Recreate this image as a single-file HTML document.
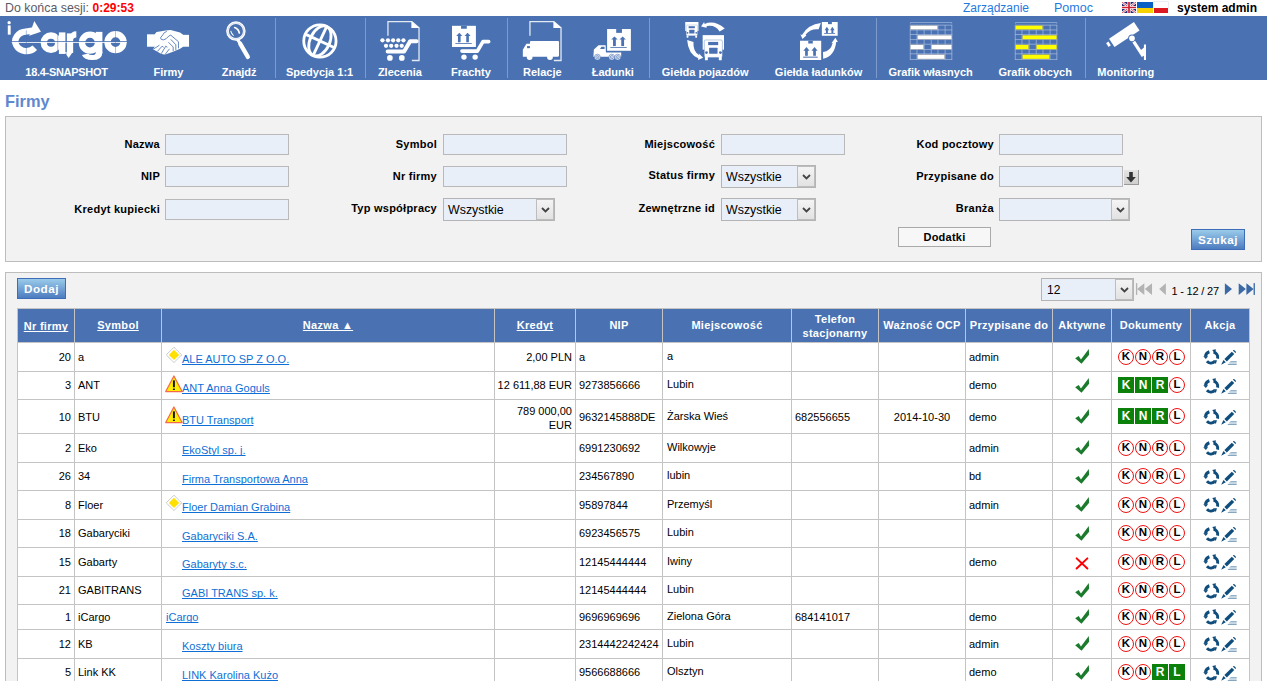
<!DOCTYPE html><html><head><meta charset="utf-8"><title>Firmy</title><style>
*{margin:0;padding:0;box-sizing:border-box}
html,body{width:1267px;height:681px;overflow:hidden;background:#fff}
body{position:relative;font-family:"Liberation Sans",sans-serif;font-size:11px;color:#000}
.abs{position:absolute}
.t{position:absolute;white-space:nowrap}
.nav{position:absolute;left:0;top:16px;width:1267px;height:64px;background:#4a72b2}
.nl{position:absolute;top:65px;white-space:nowrap;color:#fff;font-weight:bold;font-size:11px;text-align:center;line-height:14px}
.sep{position:absolute;top:18px;width:1px;height:60px;background:#7e9bcb}
.panel{position:absolute;background:#f2f2f2;border:1px solid #bdbdbd}
.lbl{position:absolute;white-space:nowrap;font-weight:bold;font-size:11px;text-align:right;color:#000;letter-spacing:0.25px;line-height:14px}
.inp{position:absolute;background:#e9eff8;border:1px solid #b9b9b9}
.sel{position:absolute;background:#e9eff8;border:1px solid #b4b4b4;font-size:12.4px;color:#000}
.selb{position:absolute;top:0px;bottom:0px;right:0px;width:18px;background:linear-gradient(#f4f4f4,#e2e2e2);border:1px solid #bdbdbd;display:flex;align-items:center;justify-content:center}
.vl{position:absolute;width:1px;background:#c4c4c4}
.hl{position:absolute;height:1px;background:#c4c4c4}
.th{position:absolute;color:#fff;font-weight:bold;font-size:11px;text-align:center;white-space:nowrap;letter-spacing:0.3px}
.th u{text-decoration:underline;text-decoration-skip-ink:none}
.c{position:absolute;white-space:nowrap;font-size:11px}
.lnk{color:#0f6fd6;text-decoration:underline;text-decoration-skip-ink:none}
.doc{position:absolute;width:16px;height:16px;border-radius:50%;border:1.5px solid #f01010;background:#fff;font-weight:bold;font-size:11.5px;line-height:13px;text-align:center;color:#000}
.docg{position:absolute;width:16px;height:16px;background:#0b800b;color:#fff;font-weight:bold;font-size:12px;line-height:16px;text-align:center}
.btn{position:absolute;background:linear-gradient(#9acbea,#4d7cc0);border:1px solid #3d6cb8;color:#fff;font-weight:bold;font-size:11.7px;text-align:center;letter-spacing:0.5px}
</style></head><body>
<div class="t" style="left:5px;top:1px;font-size:12.4px;line-height:15px;color:#5b5b66">Do końca sesji: <b style="color:#f00;font-size:12px">0:29:53</b></div>
<div class="t" style="left:963px;top:1px;font-size:12px;line-height:15px;color:#1f7ade">Zarządzanie</div>
<div class="t" style="left:1054px;top:1px;font-size:12.5px;line-height:15px;color:#1f7ade">Pomoc</div>
<div class="t" style="left:1177px;top:1px;font-size:12px;line-height:15px;font-weight:bold">system admin</div>
<svg class="abs" style="left:1122px;top:2px" width="14" height="11" viewBox="0 0 14 11"><rect width="14" height="11" fill="#232d78"/><path d="M0 0 L14 11 M14 0 L0 11" stroke="#fff" stroke-width="2.2"/><path d="M0 0 L14 11 M14 0 L0 11" stroke="#cf2030" stroke-width="0.8"/><path d="M7 0 V11 M0 5.5 H14" stroke="#fff" stroke-width="3.2"/><path d="M7 0 V11 M0 5.5 H14" stroke="#cf2030" stroke-width="1.7"/></svg>
<div class="abs" style="left:1137px;top:2px;width:16px;height:5.5px;background:#0a5fc4"></div><div class="abs" style="left:1137px;top:7.5px;width:16px;height:5.5px;background:#f7d000"></div>
<div class="abs" style="left:1154px;top:2px;width:14px;height:5.5px;background:#fff;box-shadow:0 0 0 0.5px #ddd"></div><div class="abs" style="left:1154px;top:7.5px;width:14px;height:5.5px;background:#dd1a22"></div>
<div class="nav"></div>
<svg class="abs" style="left:4px;top:18px" width="130" height="46" viewBox="0 0 1267 448"><circle cx="50" cy="45" r="16" fill="#fff"/><rect x="37" y="72" width="28" height="90" fill="#fff"/><path d="M300 290 A108 95 0 1 1 215 133" fill="none" stroke="#fff" stroke-width="62"/><path d="M295 30 L360 135 L245 172 Z" fill="#fff"/><path d="M210 102 L300 88 L300 150 L210 164Z" fill="#fff"/><circle cx="458" cy="240" r="70" fill="none" stroke="#fff" stroke-width="62"/><rect x="535" y="140" width="64" height="210" fill="#fff"/><rect x="612" y="150" width="62" height="190" fill="#fff"/><path d="M590 330 L670 330 L630 390Z" fill="#fff"/><path d="M640 185 Q650 130 705 130 L705 190 Q675 190 672 215Z" fill="#fff"/><circle cx="838" cy="240" r="78" fill="none" stroke="#fff" stroke-width="62"/><rect x="895" y="135" width="64" height="210" fill="#fff"/><path d="M959 330 Q959 410 860 410 Q780 410 760 360 L820 345 Q830 360 860 360 Q897 360 897 330Z" fill="#fff"/><circle cx="1087" cy="235" r="78" fill="none" stroke="#fff" stroke-width="62"/><rect x="70" y="226" width="1130" height="9" fill="#4a72b2"/><rect x="75" y="235" width="1122" height="8" fill="#fff"/><rect x="213" y="120" width="8" height="240" fill="#4a72b2" opacity="0.55"/><rect x="520" y="120" width="8" height="240" fill="#4a72b2" opacity="0.55"/><rect x="602" y="120" width="8" height="240" fill="#4a72b2" opacity="0.55"/><rect x="1083" y="120" width="8" height="240" fill="#4a72b2" opacity="0.55"/></svg><svg class="abs" style="left:142px;top:24px" width="52" height="36" viewBox="0 0 984 681"><rect x="95" y="195" width="150" height="235" fill="#fff"/><rect x="770" y="205" width="120" height="225" fill="#fff"/><path d="M240 195 L275 150 L450 122 L540 115 L720 160 L778 205 L778 430 L720 470 L600 520 L430 580 L350 560 L210 480 L240 430Z" fill="#fff"/><path d="M470 140 L420 165 L395 205 L350 262 L365 292 L405 300 L455 280 L510 225 L545 212 L690 335 L690 460" stroke="#4a72b2" stroke-width="16" fill="none" stroke-linejoin="round"/><path d="M500 345 L590 435 L590 515" stroke="#4a72b2" stroke-width="16" fill="none" stroke-linejoin="round"/><path d="M545 292 L640 392 L640 495" stroke="#4a72b2" stroke-width="16" fill="none" stroke-linejoin="round"/><path d="M225 470 L330 400 M290 520 L380 420 L410 440 M365 560 L450 420 L480 440 M430 585 L520 470" stroke="#4a72b2" stroke-width="16" fill="none" stroke-linejoin="round"/></svg><svg class="abs" style="left:218px;top:18px" width="40" height="44" viewBox="0 0 619 681"><circle cx="277" cy="202" r="130" fill="none" stroke="#fff" stroke-width="42"/><circle cx="277" cy="202" r="126" fill="none" stroke="#8ea8d6" stroke-width="6"/><path d="M300 330 L345 395" stroke="#fff" stroke-width="48"/><path d="M345 400 L462 602" stroke="#fff" stroke-width="66" stroke-linecap="round"/><path d="M258 148 Q318 172 330 232" fill="none" stroke="#fff" stroke-width="26" stroke-linecap="round"/><path d="M198 205 Q208 245 238 268" fill="none" stroke="#fff" stroke-width="16" stroke-linecap="round"/></svg><svg class="abs" style="left:298px;top:20px" width="44" height="42" viewBox="0 0 713 681"><circle cx="355" cy="340" r="262" fill="none" stroke="#fff" stroke-width="46"/><ellipse cx="355" cy="340" rx="160" ry="258" transform="rotate(25 355 340)" fill="none" stroke="#fff" stroke-width="46"/><path d="M466 103 L244 577" fill="none" stroke="#fff" stroke-width="46"/><path d="M118 229 L592 451" fill="none" stroke="#fff" stroke-width="46"/></svg><svg class="abs" style="left:376px;top:18px" width="50" height="44" viewBox="0 0 774 681"><path d="M185 275 V55 H555 L666 152 V658 H555" fill="none" stroke="#fff" stroke-width="20" opacity="0.85"/><path d="M548 50 L548 155 L672 155Z" fill="#fff"/><circle cx="100" cy="345" r="33" fill="#fff"/><circle cx="185" cy="345" r="33" fill="#fff"/><circle cx="265" cy="345" r="33" fill="#fff"/><circle cx="345" cy="345" r="33" fill="#fff"/><circle cx="425" cy="345" r="33" fill="#fff"/><circle cx="155" cy="430" r="33" fill="#fff"/><circle cx="235" cy="430" r="33" fill="#fff"/><circle cx="318" cy="430" r="33" fill="#fff"/><circle cx="398" cy="430" r="33" fill="#fff"/><path d="M180 518 L435 518 L530 358 L628 358" fill="none" stroke="#fff" stroke-width="62" stroke-linecap="round" stroke-linejoin="round"/><circle cx="215" cy="618" r="44" fill="#fff"/><circle cx="400" cy="618" r="44" fill="#fff"/></svg><svg class="abs" style="left:448px;top:22px" width="46" height="40" viewBox="0 0 783 681"><rect x="68" y="65" width="407" height="360" fill="#fff"/><rect x="222" y="65" width="98" height="50" fill="#4a72b2"/><rect x="169.5" y="230" width="45" height="115" fill="#4a72b2"/><path d="M140.25 240 L192 185 L243.75 240Z" fill="#4a72b2"/><rect x="310.5" y="230" width="45" height="115" fill="#4a72b2"/><path d="M281.25 240 L333 185 L384.75 240Z" fill="#4a72b2"/><rect x="125" y="358" width="280" height="14" fill="#4a72b2"/><path d="M238 495 L500 495 L595 335 L692 335" fill="none" stroke="#fff" stroke-width="62" stroke-linecap="round" stroke-linejoin="round"/><circle cx="272" cy="598" r="46" fill="#fff"/><circle cx="462" cy="598" r="46" fill="#fff"/></svg><svg class="abs" style="left:518px;top:18px" width="48" height="44" viewBox="0 0 743 681"><path d="M185 275 V55 H555 L666 152 V658 H555" fill="none" stroke="#fff" stroke-width="20" opacity="0.85"/><path d="M548 50 L548 155 L672 155Z" fill="#fff"/><rect x="185" y="355" width="450" height="245" rx="18" fill="#fff"/><path d="M75 600 L75 490 L130 400 L200 400 L200 600Z" fill="#fff"/><rect x="140" y="435" width="45" height="32" fill="#4a72b2"/><circle cx="180" cy="605" r="45" fill="#fff"/><circle cx="495" cy="605" r="45" fill="#fff"/></svg><svg class="abs" style="left:588px;top:22px" width="48" height="40" viewBox="0 0 817 681"><path d="M92 590 L100 470 L180 395 L300 395 L305 520 L565 520 L565 590Z" fill="#fff"/><path d="M205 458 L228 420 L282 420 L282 458Z" fill="#4a72b2"/><rect x="318" y="113" width="419" height="384" fill="#4a72b2"/><rect x="325" y="120" width="405" height="370" fill="#fff"/><rect x="480" y="120" width="98" height="65" fill="#4a72b2"/><rect x="426.0" y="290" width="48" height="120" fill="#4a72b2"/><path d="M394.8 300 L450 245 L505.2 300Z" fill="#4a72b2"/><rect x="566.0" y="290" width="48" height="120" fill="#4a72b2"/><path d="M534.8 300 L590 245 L645.2 300Z" fill="#4a72b2"/><rect x="380" y="428" width="280" height="14" fill="#4a72b2"/><circle cx="160" cy="598" r="50" fill="#fff" stroke="#4a72b2" stroke-width="10"/><circle cx="160" cy="598" r="27" fill="none" stroke="#4a72b2" stroke-width="12"/><circle cx="160" cy="598" r="9" fill="#4a72b2"/><circle cx="405" cy="598" r="50" fill="#fff" stroke="#4a72b2" stroke-width="10"/><circle cx="405" cy="598" r="27" fill="none" stroke="#4a72b2" stroke-width="12"/><circle cx="405" cy="598" r="9" fill="#4a72b2"/><circle cx="505" cy="598" r="50" fill="#fff" stroke="#4a72b2" stroke-width="10"/><circle cx="505" cy="598" r="27" fill="none" stroke="#4a72b2" stroke-width="12"/><circle cx="505" cy="598" r="9" fill="#4a72b2"/></svg><svg class="abs" style="left:682px;top:18px" width="46" height="44" viewBox="0 0 712 681"><rect x="320.0" y="265.0" width="330.0" height="225.0" fill="#fff"/><rect x="345.0" y="340.0" width="280.0" height="270.0" rx="20.0" fill="#fff" stroke="#4a72b2" stroke-width="6.0"/><rect x="405.0" y="370.0" width="155.0" height="50.0" fill="#4a72b2"/><rect x="420.0" y="460.0" width="130.0" height="95.0" rx="8.0" fill="#4a72b2"/><circle cx="378.0" cy="535.0" r="22.0" fill="#4a72b2"/><circle cx="595.0" cy="535.0" r="22.0" fill="#4a72b2"/><rect x="355.0" y="600.0" width="45.0" height="55.0" rx="10.0" fill="#fff"/><rect x="570.0" y="600.0" width="45.0" height="55.0" rx="10.0" fill="#fff"/><rect x="50.0" y="62.0" width="204.6" height="139.5" fill="#fff"/><rect x="65.5" y="108.5" width="173.6" height="167.4" rx="12.4" fill="#fff" stroke="#4a72b2" stroke-width="3.7199999999999998"/><rect x="102.7" y="127.1" width="96.1" height="31.0" fill="#4a72b2"/><rect x="112.0" y="182.9" width="80.6" height="58.9" rx="4.96" fill="#4a72b2"/><circle cx="85.96000000000001" cy="229.4" r="13.64" fill="#4a72b2"/><circle cx="220.5" cy="229.4" r="13.64" fill="#4a72b2"/><rect x="71.7" y="269.7" width="27.9" height="34.1" rx="6.2" fill="#fff"/><rect x="205.0" y="269.7" width="27.9" height="34.1" rx="6.2" fill="#fff"/><path d="M295 132 L342 62 L350 92 Q500 25 662 162 L582 208 Q520 100 385 122 L378 152Z" fill="#fff"/><path d="M80 340 L178 372 Q165 515 268 578 L258 545 L328 615 L248 650 L252 622 Q95 560 80 340Z" fill="#fff"/></svg><svg class="abs" style="left:796px;top:18px" width="46" height="44" viewBox="0 0 712 681"><rect x="400" y="62" width="245" height="213" fill="#fff"/><rect x="495" y="62" width="60" height="33" fill="#4a72b2"/><rect x="463.0" y="180" width="30" height="55" fill="#4a72b2"/><path d="M443.5 190 L478 135 L512.5 190Z" fill="#4a72b2"/><rect x="548.0" y="180" width="30" height="55" fill="#4a72b2"/><path d="M528.5 190 L563 135 L597.5 190Z" fill="#4a72b2"/><rect x="435" y="232" width="170" height="12" fill="#4a72b2"/><rect x="62" y="352" width="328" height="298" fill="#fff"/><rect x="190" y="352" width="70" height="43" fill="#4a72b2"/><rect x="141.0" y="495" width="42" height="90" fill="#4a72b2"/><path d="M113.7 505 L162 450 L210.3 505Z" fill="#4a72b2"/><rect x="266.0" y="495" width="42" height="90" fill="#4a72b2"/><path d="M238.7 505 L287 450 L335.3 505Z" fill="#4a72b2"/><rect x="110" y="598" width="225" height="16" fill="#4a72b2"/><path d="M385 78 L350 175 Q230 160 150 255 L160 272 L100 325 L68 250 L92 262 Q190 100 385 78Z" fill="#fff"/><path d="M418 525 Q535 515 568 385 L548 390 L610 305 L648 372 L622 372 Q600 590 420 632Z" fill="#fff"/></svg><svg class="abs" style="left:906px;top:18px" width="50" height="44" viewBox="0 0 774 681"><path d="M68 88 V70 H708 V88" fill="none" stroke="#a9bde0" stroke-width="10"/><rect x="59" y="108" width="12" height="537" fill="#a9bde0" opacity="0.9"/><rect x="164" y="108" width="12" height="537" fill="#a9bde0" opacity="0.9"/><rect x="274" y="108" width="12" height="537" fill="#a9bde0" opacity="0.9"/><rect x="384" y="108" width="12" height="537" fill="#a9bde0" opacity="0.9"/><rect x="489" y="108" width="12" height="537" fill="#a9bde0" opacity="0.9"/><rect x="599" y="108" width="12" height="537" fill="#a9bde0" opacity="0.9"/><rect x="704" y="108" width="12" height="537" fill="#a9bde0" opacity="0.9"/><rect x="60" y="104" width="656" height="12" fill="#a9bde0" opacity="0.9"/><rect x="60" y="179" width="656" height="12" fill="#a9bde0" opacity="0.9"/><rect x="60" y="249" width="656" height="12" fill="#a9bde0" opacity="0.9"/><rect x="60" y="329" width="656" height="12" fill="#a9bde0" opacity="0.9"/><rect x="60" y="399" width="656" height="12" fill="#a9bde0" opacity="0.9"/><rect x="60" y="479" width="656" height="12" fill="#a9bde0" opacity="0.9"/><rect x="60" y="549" width="656" height="12" fill="#a9bde0" opacity="0.9"/><rect x="60" y="634" width="656" height="12" fill="#a9bde0" opacity="0.9"/><rect x="65" y="115" width="425" height="65" fill="#fff" stroke="#8a8a8a" stroke-width="6"/><rect x="175" y="265" width="535" height="65" fill="#fff" stroke="#8a8a8a" stroke-width="6"/><rect x="65" y="415" width="210" height="70" fill="#fff" stroke="#8a8a8a" stroke-width="6"/><rect x="390" y="415" width="320" height="70" fill="#fff" stroke="#8a8a8a" stroke-width="6"/><rect x="175" y="565" width="425" height="70" fill="#fff" stroke="#8a8a8a" stroke-width="6"/></svg><svg class="abs" style="left:1011px;top:18px" width="50" height="44" viewBox="0 0 774 681"><path d="M68 88 V70 H708 V88" fill="none" stroke="#a9bde0" stroke-width="10"/><rect x="59" y="108" width="12" height="537" fill="#a9bde0" opacity="0.9"/><rect x="164" y="108" width="12" height="537" fill="#a9bde0" opacity="0.9"/><rect x="274" y="108" width="12" height="537" fill="#a9bde0" opacity="0.9"/><rect x="384" y="108" width="12" height="537" fill="#a9bde0" opacity="0.9"/><rect x="489" y="108" width="12" height="537" fill="#a9bde0" opacity="0.9"/><rect x="599" y="108" width="12" height="537" fill="#a9bde0" opacity="0.9"/><rect x="704" y="108" width="12" height="537" fill="#a9bde0" opacity="0.9"/><rect x="60" y="104" width="656" height="12" fill="#a9bde0" opacity="0.9"/><rect x="60" y="179" width="656" height="12" fill="#a9bde0" opacity="0.9"/><rect x="60" y="249" width="656" height="12" fill="#a9bde0" opacity="0.9"/><rect x="60" y="329" width="656" height="12" fill="#a9bde0" opacity="0.9"/><rect x="60" y="399" width="656" height="12" fill="#a9bde0" opacity="0.9"/><rect x="60" y="479" width="656" height="12" fill="#a9bde0" opacity="0.9"/><rect x="60" y="549" width="656" height="12" fill="#a9bde0" opacity="0.9"/><rect x="60" y="634" width="656" height="12" fill="#a9bde0" opacity="0.9"/><rect x="65" y="115" width="425" height="65" fill="#ffff00" stroke="#8a8a8a" stroke-width="6"/><rect x="175" y="265" width="535" height="65" fill="#ffff00" stroke="#8a8a8a" stroke-width="6"/><rect x="65" y="415" width="210" height="70" fill="#ffff00" stroke="#8a8a8a" stroke-width="6"/><rect x="390" y="415" width="320" height="70" fill="#ffff00" stroke="#8a8a8a" stroke-width="6"/><rect x="175" y="565" width="425" height="70" fill="#ffff00" stroke="#8a8a8a" stroke-width="6"/></svg><svg class="abs" style="left:1100px;top:18px" width="50" height="44" viewBox="0 0 774 681"><path d="M140 322 L525 62 L612 192 L225 448Z" fill="#fff"/><path d="M95 392 L130 365 L168 420 L133 447Z" fill="#fff"/><circle cx="495" cy="315" r="58" fill="#4a72b2"/><circle cx="495" cy="315" r="44" fill="#fff"/><path d="M522 365 L668 590" stroke="#fff" stroke-width="50"/><rect x="680" y="410" width="32" height="240" fill="#fff"/><path d="M630 500 L690 450 L690 615Z" fill="#fff"/></svg>
<div class="nl" style="left:15.5px;width:102px;letter-spacing:-0.3px">18.4-SNAPSHOT</div>
<div class="nl" style="left:143.3px;width:50.4px;">Firmy</div>
<div class="nl" style="left:211.1px;width:56.1px;">Znajdź</div>
<div class="nl" style="left:276.8px;width:85.5px;">Spedycja 1:1</div>
<div class="nl" style="left:367px;width:65.8px;">Zlecenia</div>
<div class="nl" style="left:441.2px;width:59.5px;">Frachty</div>
<div class="nl" style="left:513.4px;width:57.9px;">Relacje</div>
<div class="nl" style="left:581px;width:63.7px;">Ładunki</div>
<div class="nl" style="left:650.5px;width:109.4px;">Giełda pojazdów</div>
<div class="nl" style="left:763.4px;width:110.3px;">Giełda ładunków</div>
<div class="nl" style="left:877px;width:107.2px;">Grafik własnych</div>
<div class="nl" style="left:987.9px;width:94.6px;">Grafik obcych</div>
<div class="nl" style="left:1086.2px;width:79.1px;">Monitoring</div>
<div class="sep" style="left:275px"></div>
<div class="sep" style="left:365px"></div>
<div class="sep" style="left:507px"></div>
<div class="sep" style="left:649px"></div>
<div class="sep" style="left:876px"></div>
<div class="sep" style="left:1085px"></div>
<div class="t" style="left:5px;top:91px;font-size:16.4px;line-height:20px;font-weight:bold;color:#5f88cf">Firmy</div>
<div class="panel" style="left:5px;top:116px;width:1257px;height:146px"></div>
<div class="lbl" style="right:1107px;top:137px">Nazwa</div>
<div class="inp" style="left:165px;top:134px;width:124px;height:21px"></div>
<div class="lbl" style="right:1107px;top:169px">NIP</div>
<div class="inp" style="left:165px;top:166px;width:124px;height:21px"></div>
<div class="lbl" style="right:1107px;top:202px">Kredyt kupiecki</div>
<div class="inp" style="left:165px;top:199px;width:124px;height:21px"></div>
<div class="lbl" style="right:830px;top:137px">Symbol</div>
<div class="inp" style="left:443px;top:134px;width:124px;height:21px"></div>
<div class="lbl" style="right:830px;top:169px">Nr firmy</div>
<div class="inp" style="left:443px;top:166px;width:124px;height:21px"></div>
<div class="lbl" style="right:830px;top:201px">Typ współpracy</div>
<div class="sel" style="left:443px;top:198px;width:112px;height:23px"><span class="t" style="left:4px;top:3px;line-height:17px">Wszystkie</span><div class="selb"><svg width="9" height="6" style="display:block"><path d="M1 1 L4.5 4.5 L8 1" stroke="#444" stroke-width="1.8" fill="none"/></svg></div></div>
<div class="lbl" style="right:552px;top:137px">Miejscowość</div>
<div class="inp" style="left:721px;top:134px;width:124px;height:21px"></div>
<div class="lbl" style="right:552px;top:168px">Status firmy</div>
<div class="sel" style="left:721px;top:165px;width:95px;height:23px"><span class="t" style="left:4px;top:3px;line-height:17px">Wszystkie</span><div class="selb"><svg width="9" height="6" style="display:block"><path d="M1 1 L4.5 4.5 L8 1" stroke="#444" stroke-width="1.8" fill="none"/></svg></div></div>
<div class="lbl" style="right:552px;top:201px">Zewnętrzne id</div>
<div class="sel" style="left:721px;top:198px;width:95px;height:23px"><span class="t" style="left:4px;top:3px;line-height:17px">Wszystkie</span><div class="selb"><svg width="9" height="6" style="display:block"><path d="M1 1 L4.5 4.5 L8 1" stroke="#444" stroke-width="1.8" fill="none"/></svg></div></div>
<div class="lbl" style="right:273px;top:137px">Kod pocztowy</div>
<div class="inp" style="left:999px;top:134px;width:124px;height:21px"></div>
<div class="lbl" style="right:273px;top:169px">Przypisane do</div>
<div class="inp" style="left:999px;top:166px;width:124px;height:21px"></div>
<div class="abs" style="left:1124px;top:170px;width:15px;height:15px;background:linear-gradient(#e4e4e4,#cfcfcf);border-right:1px solid #9a9a9a;border-bottom:1px solid #9a9a9a"><svg width="15" height="15" style="position:absolute;left:0;top:0"><path d="M5.2 2h3.6v5h3l-4.8 5.5l-4.8-5.5h3z" fill="#333"/></svg></div>
<div class="lbl" style="right:273px;top:201px">Branża</div>
<div class="sel" style="left:999px;top:198px;width:131px;height:23px"><span class="t" style="left:4px;top:3px;line-height:17px"></span><div class="selb"><svg width="9" height="6" style="display:block"><path d="M1 1 L4.5 4.5 L8 1" stroke="#444" stroke-width="1.8" fill="none"/></svg></div></div>
<div class="abs" style="left:898px;top:227px;width:93px;height:20px;background:#f7f7f7;border:1px solid #a9a9a9;font-weight:bold;font-size:11px;line-height:18px;text-align:center;letter-spacing:0.25px">Dodatki</div>
<div class="btn" style="left:1191px;top:229px;width:54px;height:21px;line-height:19px">Szukaj</div>
<div class="panel" style="left:5px;top:272px;width:1257px;height:420px"></div>
<div class="btn" style="left:17px;top:278px;width:49px;height:21px;line-height:19px">Dodaj</div>
<div class="sel" style="left:1041px;top:278px;width:93px;height:23px;font-size:12px"><span class="t" style="left:5px;top:3px;line-height:17px">12</span><div class="selb"><svg width="9" height="6" style="display:block"><path d="M1 1 L4.5 4.5 L8 1" stroke="#444" stroke-width="1.8" fill="none"/></svg></div></div>
<div class="t" style="left:1171.5px;top:284px;font-size:11px;line-height:14px;color:#000;letter-spacing:-0.2px">1 - 12 / 27</div>
<svg class="abs" style="left:1132px;top:278px" width="130" height="24" viewBox="0 0 1267 234"><rect x="38" y="50" width="13" height="115" fill="#b3b3b3"/><path d="M50 108 L120 50 L120 165Z M125 108 L195 50 L195 165Z" fill="#b3b3b3"/><path d="M265 108 L330 50 L330 165Z" fill="#b3b3b3"/><path d="M905 50 L975 108 L905 165Z" fill="#3b69a6"/><path d="M1040 50 L1110 108 L1040 165Z M1115 50 L1185 108 L1115 165Z" fill="#3b69a6"/><rect x="1185" y="50" width="13" height="115" fill="#3b69a6"/></svg>
<div class="abs" style="left:17px;top:309px;width:1232px;height:33px;background:#4a72b2"></div>
<div class="abs" style="left:18px;top:342px;width:1231px;height:339px;background:#fff"></div>
<div class="hl" style="left:17px;top:308px;width:1233px"></div>
<div class="hl" style="left:17px;top:342px;width:1233px"></div>
<div class="hl" style="left:17px;top:371px;width:1233px"></div>
<div class="hl" style="left:17px;top:399px;width:1233px"></div>
<div class="hl" style="left:17px;top:433px;width:1233px"></div>
<div class="hl" style="left:17px;top:462px;width:1233px"></div>
<div class="hl" style="left:17px;top:490px;width:1233px"></div>
<div class="hl" style="left:17px;top:519px;width:1233px"></div>
<div class="hl" style="left:17px;top:547px;width:1233px"></div>
<div class="hl" style="left:17px;top:576px;width:1233px"></div>
<div class="hl" style="left:17px;top:604px;width:1233px"></div>
<div class="hl" style="left:17px;top:629px;width:1233px"></div>
<div class="hl" style="left:17px;top:658px;width:1233px"></div>
<div class="hl" style="left:17px;top:686px;width:1233px"></div>
<div class="vl" style="left:17px;top:308px;height:373px"></div>
<div class="vl" style="left:74px;top:308px;height:373px"></div>
<div class="vl" style="left:161px;top:308px;height:373px"></div>
<div class="vl" style="left:494px;top:308px;height:373px"></div>
<div class="vl" style="left:575px;top:308px;height:373px"></div>
<div class="vl" style="left:662px;top:308px;height:373px"></div>
<div class="vl" style="left:791px;top:308px;height:373px"></div>
<div class="vl" style="left:878px;top:308px;height:373px"></div>
<div class="vl" style="left:965px;top:308px;height:373px"></div>
<div class="vl" style="left:1052px;top:308px;height:373px"></div>
<div class="vl" style="left:1111px;top:308px;height:373px"></div>
<div class="vl" style="left:1190px;top:308px;height:373px"></div>
<div class="vl" style="left:1249px;top:308px;height:373px"></div>
<div class="th" style="left:18px;width:56px;top:319px;line-height:14px"><u>Nr firmy</u></div>
<div class="th" style="left:75px;width:86px;top:318px;line-height:14px"><u>Symbol</u></div>
<div class="th" style="left:162px;width:332px;top:318px;line-height:14px"><u>Nazwa ▲</u></div>
<div class="th" style="left:495px;width:80px;top:318px;line-height:14px"><u>Kredyt</u></div>
<div class="th" style="left:576px;width:86px;top:318px;line-height:14px">NIP</div>
<div class="th" style="left:663px;width:128px;top:318px;line-height:14px">Miejscowość</div>
<div class="th" style="left:792px;width:86px;top:312px;line-height:14px">Telefon<br>stacjonarny</div>
<div class="th" style="left:879px;width:86px;top:318px;line-height:14px">Ważność OCP</div>
<div class="th" style="left:966px;width:86px;top:318px;line-height:14px">Przypisane do</div>
<div class="th" style="left:1053px;width:58px;top:318px;line-height:14px">Aktywne</div>
<div class="th" style="left:1112px;width:78px;top:318px;line-height:14px">Dokumenty</div>
<div class="th" style="left:1191px;width:58px;top:318px;line-height:14px">Akcja</div>
<div class="c" style="left:18px;width:53px;text-align:right;top:343px;height:28px;line-height:28px;">20</div>
<div class="c" style="left:78px;top:343px;height:28px;line-height:28px;">a</div>
<div class="c" style="left:182px;top:345px;height:28px;line-height:28px"><span class="lnk">ALE AUTO SP Z O.O.</span></div>
<svg class="abs" style="left:162px;top:344.0px" width="30" height="26" viewBox="0 0 786 681"><path d="M315 85 L515 285 L315 485 L110 285Z" fill="#fff" stroke="#a8a8a8" stroke-width="22" stroke-dasharray="30 12"/><path d="M315 150 L450 285 L315 420 L180 285Z" fill="#ffe000"/></svg>
<div class="c" style="left:495px;width:77px;text-align:right;top:343px;height:28px;line-height:28px;">2,00 PLN</div>
<div class="c" style="left:579px;top:343px;height:28px;line-height:28px;">a</div>
<div class="c" style="left:667px;top:342px;height:28px;line-height:28px;">a</div>
<div class="c" style="left:969px;top:343px;height:28px;line-height:28px;">admin</div>
<svg class="abs" style="left:1066px;top:344.0px" width="32" height="32" viewBox="0 0 681 681"><path d="M195 305 L270 258 L318 332 L485 108 L492 228 L330 422Z" fill="#1c7a2c"/></svg>
<div class="doc" style="left:1118px;top:348.7px">K</div>
<div class="doc" style="left:1135px;top:348.7px">N</div>
<div class="doc" style="left:1152px;top:348.7px">R</div>
<div class="doc" style="left:1169px;top:348.7px">L</div>
<svg class="abs" style="left:1200px;top:346.0px" width="40" height="22" viewBox="0 0 1238 681"><path d="M290 180 A175 175 0 0 0 170 330" fill="none" stroke="#0f4d7c" stroke-width="95"/><path d="M100 315 L250 315 L180 405Z" fill="#0f4d7c"/><path d="M420 185 A175 175 0 0 1 545 390" fill="none" stroke="#0f4d7c" stroke-width="95"/><path d="M378 125 L492 98 L472 245Z" fill="#0f4d7c"/><path d="M215 470 A175 175 0 0 0 450 490" fill="none" stroke="#0f4d7c" stroke-width="95"/><path d="M410 440 L525 438 L490 555Z" fill="#0f4d7c"/><path d="M755 400 L985 175 L1060 250 L830 480Z" fill="#0f4d7c"/><path d="M1015 140 Q1040 110 1075 140 L1110 178 Q1120 210 1095 220Z" fill="#0f4d7c"/><path d="M728 432 L798 505 L655 580Z" fill="#0f4d7c"/><rect x="940" y="465" width="195" height="25" fill="#7aa0bd"/><rect x="905" y="500" width="230" height="45" fill="#b4cbdb"/><rect x="860" y="555" width="275" height="25" fill="#5a87aa"/></svg>
<div class="c" style="left:18px;width:53px;text-align:right;top:372px;height:27px;line-height:27px;">3</div>
<div class="c" style="left:78px;top:372px;height:27px;line-height:27px;">ANT</div>
<div class="c" style="left:182px;top:375px;height:27px;line-height:27px"><span class="lnk">ANT Anna Goguls</span></div>
<svg class="abs" style="left:162px;top:372.0px" width="30" height="60" viewBox="0 0 340 681"><path d="M135 45 L228 222 L42 222Z" fill="#ffee00" stroke="#f26a4a" stroke-width="14" stroke-linejoin="round"/><rect x="124" y="95" width="22" height="78" fill="#111"/><rect x="124" y="188" width="22" height="16" fill="#111"/></svg>
<div class="c" style="left:495px;width:77px;text-align:right;top:372px;height:27px;line-height:27px;">12 611,88 EUR</div>
<div class="c" style="left:579px;top:372px;height:27px;line-height:27px;">9273856666</div>
<div class="c" style="left:667px;top:371px;height:27px;line-height:27px;">Lubin</div>
<div class="c" style="left:969px;top:372px;height:27px;line-height:27px;">demo</div>
<svg class="abs" style="left:1066px;top:372.5px" width="32" height="32" viewBox="0 0 681 681"><path d="M195 305 L270 258 L318 332 L485 108 L492 228 L330 422Z" fill="#1c7a2c"/></svg>
<div class="docg" style="left:1118px;top:377.2px">K</div>
<div class="docg" style="left:1135px;top:377.2px">N</div>
<div class="docg" style="left:1152px;top:377.2px">R</div>
<div class="doc" style="left:1169px;top:377.2px">L</div>
<svg class="abs" style="left:1200px;top:374.5px" width="40" height="22" viewBox="0 0 1238 681"><path d="M290 180 A175 175 0 0 0 170 330" fill="none" stroke="#0f4d7c" stroke-width="95"/><path d="M100 315 L250 315 L180 405Z" fill="#0f4d7c"/><path d="M420 185 A175 175 0 0 1 545 390" fill="none" stroke="#0f4d7c" stroke-width="95"/><path d="M378 125 L492 98 L472 245Z" fill="#0f4d7c"/><path d="M215 470 A175 175 0 0 0 450 490" fill="none" stroke="#0f4d7c" stroke-width="95"/><path d="M410 440 L525 438 L490 555Z" fill="#0f4d7c"/><path d="M755 400 L985 175 L1060 250 L830 480Z" fill="#0f4d7c"/><path d="M1015 140 Q1040 110 1075 140 L1110 178 Q1120 210 1095 220Z" fill="#0f4d7c"/><path d="M728 432 L798 505 L655 580Z" fill="#0f4d7c"/><rect x="940" y="465" width="195" height="25" fill="#7aa0bd"/><rect x="905" y="500" width="230" height="45" fill="#b4cbdb"/><rect x="860" y="555" width="275" height="25" fill="#5a87aa"/></svg>
<div class="c" style="left:18px;width:53px;text-align:right;top:401px;height:33px;line-height:33px;">10</div>
<div class="c" style="left:78px;top:401px;height:33px;line-height:33px;">BTU</div>
<div class="c" style="left:182px;top:404px;height:33px;line-height:33px"><span class="lnk">BTU Transport</span></div>
<svg class="abs" style="left:162px;top:403.0px" width="30" height="60" viewBox="0 0 340 681"><path d="M135 45 L228 222 L42 222Z" fill="#ffee00" stroke="#f26a4a" stroke-width="14" stroke-linejoin="round"/><rect x="124" y="95" width="22" height="78" fill="#111"/><rect x="124" y="188" width="22" height="16" fill="#111"/></svg>
<div class="c" style="left:495px;width:77px;text-align:right;top:404px;line-height:14px">789 000,00<br>EUR</div>
<div class="c" style="left:579px;top:401px;height:33px;line-height:33px;">9632145888DE</div>
<div class="c" style="left:667px;top:400px;height:33px;line-height:33px;">Żarska Wieś</div>
<div class="c" style="left:795px;top:401px;height:33px;line-height:33px;">682556655</div>
<div class="c" style="left:879px;width:86px;text-align:center;top:401px;height:33px;line-height:33px;">2014-10-30</div>
<div class="c" style="left:969px;top:401px;height:33px;line-height:33px;">demo</div>
<svg class="abs" style="left:1066px;top:403.5px" width="32" height="32" viewBox="0 0 681 681"><path d="M195 305 L270 258 L318 332 L485 108 L492 228 L330 422Z" fill="#1c7a2c"/></svg>
<div class="docg" style="left:1118px;top:408.2px">K</div>
<div class="docg" style="left:1135px;top:408.2px">N</div>
<div class="docg" style="left:1152px;top:408.2px">R</div>
<div class="doc" style="left:1169px;top:408.2px">L</div>
<svg class="abs" style="left:1200px;top:405.5px" width="40" height="22" viewBox="0 0 1238 681"><path d="M290 180 A175 175 0 0 0 170 330" fill="none" stroke="#0f4d7c" stroke-width="95"/><path d="M100 315 L250 315 L180 405Z" fill="#0f4d7c"/><path d="M420 185 A175 175 0 0 1 545 390" fill="none" stroke="#0f4d7c" stroke-width="95"/><path d="M378 125 L492 98 L472 245Z" fill="#0f4d7c"/><path d="M215 470 A175 175 0 0 0 450 490" fill="none" stroke="#0f4d7c" stroke-width="95"/><path d="M410 440 L525 438 L490 555Z" fill="#0f4d7c"/><path d="M755 400 L985 175 L1060 250 L830 480Z" fill="#0f4d7c"/><path d="M1015 140 Q1040 110 1075 140 L1110 178 Q1120 210 1095 220Z" fill="#0f4d7c"/><path d="M728 432 L798 505 L655 580Z" fill="#0f4d7c"/><rect x="940" y="465" width="195" height="25" fill="#7aa0bd"/><rect x="905" y="500" width="230" height="45" fill="#b4cbdb"/><rect x="860" y="555" width="275" height="25" fill="#5a87aa"/></svg>
<div class="c" style="left:18px;width:53px;text-align:right;top:434px;height:28px;line-height:28px;">2</div>
<div class="c" style="left:78px;top:434px;height:28px;line-height:28px;">Eko</div>
<div class="c" style="left:182px;top:436px;height:28px;line-height:28px"><span class="lnk">EkoStyl sp. j.</span></div>
<div class="c" style="left:579px;top:434px;height:28px;line-height:28px;">6991230692</div>
<div class="c" style="left:667px;top:433px;height:28px;line-height:28px;">Wilkowyje</div>
<div class="c" style="left:969px;top:434px;height:28px;line-height:28px;">admin</div>
<svg class="abs" style="left:1066px;top:435.0px" width="32" height="32" viewBox="0 0 681 681"><path d="M195 305 L270 258 L318 332 L485 108 L492 228 L330 422Z" fill="#1c7a2c"/></svg>
<div class="doc" style="left:1118px;top:439.7px">K</div>
<div class="doc" style="left:1135px;top:439.7px">N</div>
<div class="doc" style="left:1152px;top:439.7px">R</div>
<div class="doc" style="left:1169px;top:439.7px">L</div>
<svg class="abs" style="left:1200px;top:437.0px" width="40" height="22" viewBox="0 0 1238 681"><path d="M290 180 A175 175 0 0 0 170 330" fill="none" stroke="#0f4d7c" stroke-width="95"/><path d="M100 315 L250 315 L180 405Z" fill="#0f4d7c"/><path d="M420 185 A175 175 0 0 1 545 390" fill="none" stroke="#0f4d7c" stroke-width="95"/><path d="M378 125 L492 98 L472 245Z" fill="#0f4d7c"/><path d="M215 470 A175 175 0 0 0 450 490" fill="none" stroke="#0f4d7c" stroke-width="95"/><path d="M410 440 L525 438 L490 555Z" fill="#0f4d7c"/><path d="M755 400 L985 175 L1060 250 L830 480Z" fill="#0f4d7c"/><path d="M1015 140 Q1040 110 1075 140 L1110 178 Q1120 210 1095 220Z" fill="#0f4d7c"/><path d="M728 432 L798 505 L655 580Z" fill="#0f4d7c"/><rect x="940" y="465" width="195" height="25" fill="#7aa0bd"/><rect x="905" y="500" width="230" height="45" fill="#b4cbdb"/><rect x="860" y="555" width="275" height="25" fill="#5a87aa"/></svg>
<div class="c" style="left:18px;width:53px;text-align:right;top:463px;height:27px;line-height:27px;">26</div>
<div class="c" style="left:78px;top:463px;height:27px;line-height:27px;">34</div>
<div class="c" style="left:182px;top:466px;height:27px;line-height:27px"><span class="lnk">Firma Transportowa Anna</span></div>
<div class="c" style="left:579px;top:463px;height:27px;line-height:27px;">234567890</div>
<div class="c" style="left:667px;top:462px;height:27px;line-height:27px;">lubin</div>
<div class="c" style="left:969px;top:463px;height:27px;line-height:27px;">bd</div>
<svg class="abs" style="left:1066px;top:463.5px" width="32" height="32" viewBox="0 0 681 681"><path d="M195 305 L270 258 L318 332 L485 108 L492 228 L330 422Z" fill="#1c7a2c"/></svg>
<div class="doc" style="left:1118px;top:468.2px">K</div>
<div class="doc" style="left:1135px;top:468.2px">N</div>
<div class="doc" style="left:1152px;top:468.2px">R</div>
<div class="doc" style="left:1169px;top:468.2px">L</div>
<svg class="abs" style="left:1200px;top:465.5px" width="40" height="22" viewBox="0 0 1238 681"><path d="M290 180 A175 175 0 0 0 170 330" fill="none" stroke="#0f4d7c" stroke-width="95"/><path d="M100 315 L250 315 L180 405Z" fill="#0f4d7c"/><path d="M420 185 A175 175 0 0 1 545 390" fill="none" stroke="#0f4d7c" stroke-width="95"/><path d="M378 125 L492 98 L472 245Z" fill="#0f4d7c"/><path d="M215 470 A175 175 0 0 0 450 490" fill="none" stroke="#0f4d7c" stroke-width="95"/><path d="M410 440 L525 438 L490 555Z" fill="#0f4d7c"/><path d="M755 400 L985 175 L1060 250 L830 480Z" fill="#0f4d7c"/><path d="M1015 140 Q1040 110 1075 140 L1110 178 Q1120 210 1095 220Z" fill="#0f4d7c"/><path d="M728 432 L798 505 L655 580Z" fill="#0f4d7c"/><rect x="940" y="465" width="195" height="25" fill="#7aa0bd"/><rect x="905" y="500" width="230" height="45" fill="#b4cbdb"/><rect x="860" y="555" width="275" height="25" fill="#5a87aa"/></svg>
<div class="c" style="left:18px;width:53px;text-align:right;top:491px;height:28px;line-height:28px;">8</div>
<div class="c" style="left:78px;top:491px;height:28px;line-height:28px;">Floer</div>
<div class="c" style="left:182px;top:493px;height:28px;line-height:28px"><span class="lnk">Floer Damian Grabina</span></div>
<svg class="abs" style="left:162px;top:492.0px" width="30" height="26" viewBox="0 0 786 681"><path d="M315 85 L515 285 L315 485 L110 285Z" fill="#fff" stroke="#a8a8a8" stroke-width="22" stroke-dasharray="30 12"/><path d="M315 150 L450 285 L315 420 L180 285Z" fill="#ffe000"/></svg>
<div class="c" style="left:579px;top:491px;height:28px;line-height:28px;">95897844</div>
<div class="c" style="left:667px;top:490px;height:28px;line-height:28px;">Przemyśl</div>
<div class="c" style="left:969px;top:491px;height:28px;line-height:28px;">admin</div>
<svg class="abs" style="left:1066px;top:492.0px" width="32" height="32" viewBox="0 0 681 681"><path d="M195 305 L270 258 L318 332 L485 108 L492 228 L330 422Z" fill="#1c7a2c"/></svg>
<div class="doc" style="left:1118px;top:496.7px">K</div>
<div class="doc" style="left:1135px;top:496.7px">N</div>
<div class="doc" style="left:1152px;top:496.7px">R</div>
<div class="doc" style="left:1169px;top:496.7px">L</div>
<svg class="abs" style="left:1200px;top:494.0px" width="40" height="22" viewBox="0 0 1238 681"><path d="M290 180 A175 175 0 0 0 170 330" fill="none" stroke="#0f4d7c" stroke-width="95"/><path d="M100 315 L250 315 L180 405Z" fill="#0f4d7c"/><path d="M420 185 A175 175 0 0 1 545 390" fill="none" stroke="#0f4d7c" stroke-width="95"/><path d="M378 125 L492 98 L472 245Z" fill="#0f4d7c"/><path d="M215 470 A175 175 0 0 0 450 490" fill="none" stroke="#0f4d7c" stroke-width="95"/><path d="M410 440 L525 438 L490 555Z" fill="#0f4d7c"/><path d="M755 400 L985 175 L1060 250 L830 480Z" fill="#0f4d7c"/><path d="M1015 140 Q1040 110 1075 140 L1110 178 Q1120 210 1095 220Z" fill="#0f4d7c"/><path d="M728 432 L798 505 L655 580Z" fill="#0f4d7c"/><rect x="940" y="465" width="195" height="25" fill="#7aa0bd"/><rect x="905" y="500" width="230" height="45" fill="#b4cbdb"/><rect x="860" y="555" width="275" height="25" fill="#5a87aa"/></svg>
<div class="c" style="left:18px;width:53px;text-align:right;top:520px;height:27px;line-height:27px;">18</div>
<div class="c" style="left:78px;top:520px;height:27px;line-height:27px;">Gabaryciki</div>
<div class="c" style="left:182px;top:523px;height:27px;line-height:27px"><span class="lnk">Gabaryciki S.A.</span></div>
<div class="c" style="left:579px;top:520px;height:27px;line-height:27px;">6923456575</div>
<div class="c" style="left:667px;top:519px;height:27px;line-height:27px;">Lubin</div>
<svg class="abs" style="left:1066px;top:520.5px" width="32" height="32" viewBox="0 0 681 681"><path d="M195 305 L270 258 L318 332 L485 108 L492 228 L330 422Z" fill="#1c7a2c"/></svg>
<div class="doc" style="left:1118px;top:525.2px">K</div>
<div class="doc" style="left:1135px;top:525.2px">N</div>
<div class="doc" style="left:1152px;top:525.2px">R</div>
<div class="doc" style="left:1169px;top:525.2px">L</div>
<svg class="abs" style="left:1200px;top:522.5px" width="40" height="22" viewBox="0 0 1238 681"><path d="M290 180 A175 175 0 0 0 170 330" fill="none" stroke="#0f4d7c" stroke-width="95"/><path d="M100 315 L250 315 L180 405Z" fill="#0f4d7c"/><path d="M420 185 A175 175 0 0 1 545 390" fill="none" stroke="#0f4d7c" stroke-width="95"/><path d="M378 125 L492 98 L472 245Z" fill="#0f4d7c"/><path d="M215 470 A175 175 0 0 0 450 490" fill="none" stroke="#0f4d7c" stroke-width="95"/><path d="M410 440 L525 438 L490 555Z" fill="#0f4d7c"/><path d="M755 400 L985 175 L1060 250 L830 480Z" fill="#0f4d7c"/><path d="M1015 140 Q1040 110 1075 140 L1110 178 Q1120 210 1095 220Z" fill="#0f4d7c"/><path d="M728 432 L798 505 L655 580Z" fill="#0f4d7c"/><rect x="940" y="465" width="195" height="25" fill="#7aa0bd"/><rect x="905" y="500" width="230" height="45" fill="#b4cbdb"/><rect x="860" y="555" width="275" height="25" fill="#5a87aa"/></svg>
<div class="c" style="left:18px;width:53px;text-align:right;top:548px;height:28px;line-height:28px;">15</div>
<div class="c" style="left:78px;top:548px;height:28px;line-height:28px;">Gabarty</div>
<div class="c" style="left:182px;top:550px;height:28px;line-height:28px"><span class="lnk">Gabaryty s.c.</span></div>
<div class="c" style="left:579px;top:548px;height:28px;line-height:28px;">12145444444</div>
<div class="c" style="left:667px;top:547px;height:28px;line-height:28px;">Iwiny</div>
<div class="c" style="left:969px;top:548px;height:28px;line-height:28px;">demo</div>
<svg class="abs" style="left:1066px;top:548.0px" width="32" height="28" viewBox="0 0 778 681"><path d="M258 252 L520 500 M520 252 L258 500" stroke="#f00" stroke-width="48" stroke-linecap="round"/></svg>
<div class="doc" style="left:1118px;top:553.7px">K</div>
<div class="doc" style="left:1135px;top:553.7px">N</div>
<div class="doc" style="left:1152px;top:553.7px">R</div>
<div class="doc" style="left:1169px;top:553.7px">L</div>
<svg class="abs" style="left:1200px;top:551.0px" width="40" height="22" viewBox="0 0 1238 681"><path d="M290 180 A175 175 0 0 0 170 330" fill="none" stroke="#0f4d7c" stroke-width="95"/><path d="M100 315 L250 315 L180 405Z" fill="#0f4d7c"/><path d="M420 185 A175 175 0 0 1 545 390" fill="none" stroke="#0f4d7c" stroke-width="95"/><path d="M378 125 L492 98 L472 245Z" fill="#0f4d7c"/><path d="M215 470 A175 175 0 0 0 450 490" fill="none" stroke="#0f4d7c" stroke-width="95"/><path d="M410 440 L525 438 L490 555Z" fill="#0f4d7c"/><path d="M755 400 L985 175 L1060 250 L830 480Z" fill="#0f4d7c"/><path d="M1015 140 Q1040 110 1075 140 L1110 178 Q1120 210 1095 220Z" fill="#0f4d7c"/><path d="M728 432 L798 505 L655 580Z" fill="#0f4d7c"/><rect x="940" y="465" width="195" height="25" fill="#7aa0bd"/><rect x="905" y="500" width="230" height="45" fill="#b4cbdb"/><rect x="860" y="555" width="275" height="25" fill="#5a87aa"/></svg>
<div class="c" style="left:18px;width:53px;text-align:right;top:577px;height:27px;line-height:27px;">21</div>
<div class="c" style="left:78px;top:577px;height:27px;line-height:27px;">GABITRANS</div>
<div class="c" style="left:182px;top:580px;height:27px;line-height:27px"><span class="lnk">GABI TRANS sp. k.</span></div>
<div class="c" style="left:579px;top:577px;height:27px;line-height:27px;">12145444444</div>
<div class="c" style="left:667px;top:576px;height:27px;line-height:27px;">Lubin</div>
<svg class="abs" style="left:1066px;top:577.5px" width="32" height="32" viewBox="0 0 681 681"><path d="M195 305 L270 258 L318 332 L485 108 L492 228 L330 422Z" fill="#1c7a2c"/></svg>
<div class="doc" style="left:1118px;top:582.2px">K</div>
<div class="doc" style="left:1135px;top:582.2px">N</div>
<div class="doc" style="left:1152px;top:582.2px">R</div>
<div class="doc" style="left:1169px;top:582.2px">L</div>
<svg class="abs" style="left:1200px;top:579.5px" width="40" height="22" viewBox="0 0 1238 681"><path d="M290 180 A175 175 0 0 0 170 330" fill="none" stroke="#0f4d7c" stroke-width="95"/><path d="M100 315 L250 315 L180 405Z" fill="#0f4d7c"/><path d="M420 185 A175 175 0 0 1 545 390" fill="none" stroke="#0f4d7c" stroke-width="95"/><path d="M378 125 L492 98 L472 245Z" fill="#0f4d7c"/><path d="M215 470 A175 175 0 0 0 450 490" fill="none" stroke="#0f4d7c" stroke-width="95"/><path d="M410 440 L525 438 L490 555Z" fill="#0f4d7c"/><path d="M755 400 L985 175 L1060 250 L830 480Z" fill="#0f4d7c"/><path d="M1015 140 Q1040 110 1075 140 L1110 178 Q1120 210 1095 220Z" fill="#0f4d7c"/><path d="M728 432 L798 505 L655 580Z" fill="#0f4d7c"/><rect x="940" y="465" width="195" height="25" fill="#7aa0bd"/><rect x="905" y="500" width="230" height="45" fill="#b4cbdb"/><rect x="860" y="555" width="275" height="25" fill="#5a87aa"/></svg>
<div class="c" style="left:18px;width:53px;text-align:right;top:605px;height:24px;line-height:24px;">1</div>
<div class="c" style="left:78px;top:605px;height:24px;line-height:24px;">iCargo</div>
<div class="c" style="left:166px;top:605px;height:24px;line-height:24px"><span class="lnk">iCargo</span></div>
<div class="c" style="left:579px;top:605px;height:24px;line-height:24px;">9696969696</div>
<div class="c" style="left:667px;top:604px;height:24px;line-height:24px;">Zielona Góra</div>
<div class="c" style="left:795px;top:605px;height:24px;line-height:24px;">684141017</div>
<div class="c" style="left:969px;top:605px;height:24px;line-height:24px;">demo</div>
<svg class="abs" style="left:1066px;top:604.0px" width="32" height="32" viewBox="0 0 681 681"><path d="M195 305 L270 258 L318 332 L485 108 L492 228 L330 422Z" fill="#1c7a2c"/></svg>
<div class="doc" style="left:1118px;top:608.7px">K</div>
<div class="doc" style="left:1135px;top:608.7px">N</div>
<div class="doc" style="left:1152px;top:608.7px">R</div>
<div class="doc" style="left:1169px;top:608.7px">L</div>
<svg class="abs" style="left:1200px;top:606.0px" width="40" height="22" viewBox="0 0 1238 681"><path d="M290 180 A175 175 0 0 0 170 330" fill="none" stroke="#0f4d7c" stroke-width="95"/><path d="M100 315 L250 315 L180 405Z" fill="#0f4d7c"/><path d="M420 185 A175 175 0 0 1 545 390" fill="none" stroke="#0f4d7c" stroke-width="95"/><path d="M378 125 L492 98 L472 245Z" fill="#0f4d7c"/><path d="M215 470 A175 175 0 0 0 450 490" fill="none" stroke="#0f4d7c" stroke-width="95"/><path d="M410 440 L525 438 L490 555Z" fill="#0f4d7c"/><path d="M755 400 L985 175 L1060 250 L830 480Z" fill="#0f4d7c"/><path d="M1015 140 Q1040 110 1075 140 L1110 178 Q1120 210 1095 220Z" fill="#0f4d7c"/><path d="M728 432 L798 505 L655 580Z" fill="#0f4d7c"/><rect x="940" y="465" width="195" height="25" fill="#7aa0bd"/><rect x="905" y="500" width="230" height="45" fill="#b4cbdb"/><rect x="860" y="555" width="275" height="25" fill="#5a87aa"/></svg>
<div class="c" style="left:18px;width:53px;text-align:right;top:630px;height:28px;line-height:28px;">12</div>
<div class="c" style="left:78px;top:630px;height:28px;line-height:28px;">KB</div>
<div class="c" style="left:182px;top:632px;height:28px;line-height:28px"><span class="lnk">Koszty biura</span></div>
<div class="c" style="left:579px;top:630px;height:28px;line-height:28px;">2314442242424</div>
<div class="c" style="left:667px;top:629px;height:28px;line-height:28px;">Lubin</div>
<div class="c" style="left:969px;top:630px;height:28px;line-height:28px;">admin</div>
<svg class="abs" style="left:1066px;top:631.0px" width="32" height="32" viewBox="0 0 681 681"><path d="M195 305 L270 258 L318 332 L485 108 L492 228 L330 422Z" fill="#1c7a2c"/></svg>
<div class="doc" style="left:1118px;top:635.7px">K</div>
<div class="doc" style="left:1135px;top:635.7px">N</div>
<div class="doc" style="left:1152px;top:635.7px">R</div>
<div class="doc" style="left:1169px;top:635.7px">L</div>
<svg class="abs" style="left:1200px;top:633.0px" width="40" height="22" viewBox="0 0 1238 681"><path d="M290 180 A175 175 0 0 0 170 330" fill="none" stroke="#0f4d7c" stroke-width="95"/><path d="M100 315 L250 315 L180 405Z" fill="#0f4d7c"/><path d="M420 185 A175 175 0 0 1 545 390" fill="none" stroke="#0f4d7c" stroke-width="95"/><path d="M378 125 L492 98 L472 245Z" fill="#0f4d7c"/><path d="M215 470 A175 175 0 0 0 450 490" fill="none" stroke="#0f4d7c" stroke-width="95"/><path d="M410 440 L525 438 L490 555Z" fill="#0f4d7c"/><path d="M755 400 L985 175 L1060 250 L830 480Z" fill="#0f4d7c"/><path d="M1015 140 Q1040 110 1075 140 L1110 178 Q1120 210 1095 220Z" fill="#0f4d7c"/><path d="M728 432 L798 505 L655 580Z" fill="#0f4d7c"/><rect x="940" y="465" width="195" height="25" fill="#7aa0bd"/><rect x="905" y="500" width="230" height="45" fill="#b4cbdb"/><rect x="860" y="555" width="275" height="25" fill="#5a87aa"/></svg>
<div class="c" style="left:18px;width:53px;text-align:right;top:659px;height:27px;line-height:27px;">5</div>
<div class="c" style="left:78px;top:659px;height:27px;line-height:27px;">Link KK</div>
<div class="c" style="left:182px;top:662px;height:27px;line-height:27px"><span class="lnk">LINK Karolina Kużo</span></div>
<div class="c" style="left:579px;top:659px;height:27px;line-height:27px;">9566688666</div>
<div class="c" style="left:667px;top:658px;height:27px;line-height:27px;">Olsztyn</div>
<div class="c" style="left:969px;top:659px;height:27px;line-height:27px;">demo</div>
<svg class="abs" style="left:1066px;top:659.5px" width="32" height="32" viewBox="0 0 681 681"><path d="M195 305 L270 258 L318 332 L485 108 L492 228 L330 422Z" fill="#1c7a2c"/></svg>
<div class="doc" style="left:1118px;top:664.2px">K</div>
<div class="doc" style="left:1135px;top:664.2px">N</div>
<div class="docg" style="left:1152px;top:664.2px">R</div>
<div class="docg" style="left:1169px;top:664.2px">L</div>
<svg class="abs" style="left:1200px;top:661.5px" width="40" height="22" viewBox="0 0 1238 681"><path d="M290 180 A175 175 0 0 0 170 330" fill="none" stroke="#0f4d7c" stroke-width="95"/><path d="M100 315 L250 315 L180 405Z" fill="#0f4d7c"/><path d="M420 185 A175 175 0 0 1 545 390" fill="none" stroke="#0f4d7c" stroke-width="95"/><path d="M378 125 L492 98 L472 245Z" fill="#0f4d7c"/><path d="M215 470 A175 175 0 0 0 450 490" fill="none" stroke="#0f4d7c" stroke-width="95"/><path d="M410 440 L525 438 L490 555Z" fill="#0f4d7c"/><path d="M755 400 L985 175 L1060 250 L830 480Z" fill="#0f4d7c"/><path d="M1015 140 Q1040 110 1075 140 L1110 178 Q1120 210 1095 220Z" fill="#0f4d7c"/><path d="M728 432 L798 505 L655 580Z" fill="#0f4d7c"/><rect x="940" y="465" width="195" height="25" fill="#7aa0bd"/><rect x="905" y="500" width="230" height="45" fill="#b4cbdb"/><rect x="860" y="555" width="275" height="25" fill="#5a87aa"/></svg>
</body></html>
